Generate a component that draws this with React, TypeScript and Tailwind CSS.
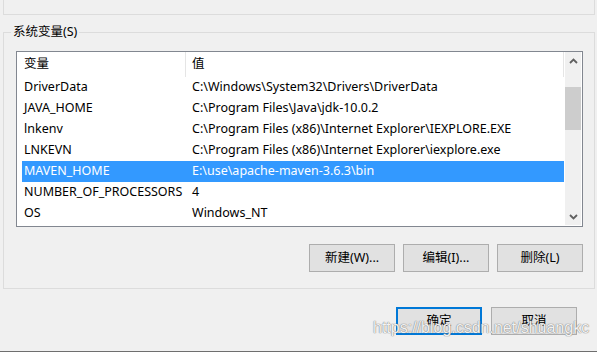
const ROWS: [string, string][] = [
  ["DriverData", "C:\\Windows\\System32\\Drivers\\DriverData"],
  ["JAVA_HOME", "C:\\Program Files\\Java\\jdk-10.0.2"],
  ["lnkenv", "C:\\Program Files (x86)\\Internet Explorer\\IEXPLORE.EXE"],
  ["LNKEVN", "C:\\Program Files (x86)\\Internet Explorer\\iexplore.exe"],
  ["MAVEN_HOME", "E:\\use\\apache-maven-3.6.3\\bin"],
  ["NUMBER_OF_PROCESSORS", "4"],
  ["OS", "Windows_NT"],
];

const SELECTED = 4;

function WinButton({ label, primary }: { label: string; primary?: boolean }) {
  return (
    <button
      type="button"
      className={`flex h-[28px] w-[86px] items-center justify-center bg-[#e1e1e1] text-[12.5px] text-black ${
        primary ? "border-2 border-[#0078d7]" : "border border-[#adadad]"
      }`}
    >
      {label}
    </button>
  );
}

function Chevron({ up }: { up?: boolean }) {
  return (
    <svg width="9" height="6" viewBox="0 0 9 6" className={up ? "" : "rotate-180"}>
      <path d="M1 5 L4.5 1.5 L8 5" fill="none" stroke="#606060" strokeWidth="1.8" />
    </svg>
  );
}

export default function App() {
  return (
    <div
      className="relative h-[352px] w-[597px] overflow-hidden bg-[#f0f0f0] text-[12.5px] text-black"
      style={{ fontFamily: '"Noto Sans", "Noto Sans CJK SC", sans-serif' }}
    >
      {/* bottom of the user variables group */}
      <div className="ml-[3px] h-[15px] w-[592px] border-x border-b border-[#dcdcdc]" />

      {/* system variables group */}
      <div className="relative ml-[3px] mt-[17px] h-[257px] w-[592px] border border-[#dcdcdc]">
        <span className="absolute left-[7px] top-[-10px] bg-[#f0f0f0] px-[2px] leading-[18px]">
          系统变量(S)
        </span>

        <div className="ml-[12px] mt-[18px] flex h-[176px] w-[567px] border border-[#828790] bg-white">
          <div className="flex w-[548px] flex-col overflow-hidden">
            <div className="flex h-[25px] shrink-0">
              <div className="flex w-[168px] items-center pl-[7px]">变量</div>
              <div className="w-px bg-[#e5e5e5]" />
              <div className="flex w-[377px] items-center pl-[6px]">值</div>
              <div className="w-px bg-[#e5e5e5]" />
            </div>
            {ROWS.map(([name, value], i) => (
              <div key={name} className="flex h-[21px] shrink-0 pl-[5px] pr-[1px]">
                <div
                  className={`flex flex-1 items-center whitespace-nowrap ${
                    i === SELECTED ? "bg-[#3399ff] text-white" : ""
                  }`}
                >
                  <div className="w-[170px] pl-[2px]">{name}</div>
                  <div className="flex-1">{value}</div>
                </div>
              </div>
            ))}
          </div>

          <div className="mb-[1px] flex w-[16px] flex-col bg-[#f0f0f0]">
            <div className="flex h-[17px] items-center justify-center">
              <Chevron up />
            </div>
            <div className="h-[18px]" />
            <div className="h-[43px] bg-[#cdcdcd]" />
            <div className="flex-1" />
            <div className="flex h-[17px] items-center justify-center">
              <Chevron />
            </div>
          </div>
        </div>

        <div className="mt-[17px] flex w-[579px] justify-end gap-[8px]">
          <WinButton label="新建(W)..." />
          <WinButton label="编辑(I)..." />
          <WinButton label="删除(L)" />
        </div>
      </div>

      <div className="mt-[18px] flex w-[577px] justify-end gap-[9px]">
        <WinButton label="确定" primary />
        <WinButton label="取消" />
      </div>

      <div className="absolute bottom-0 left-0 h-px w-full bg-[#6e6e6e]" />

      <div
        className="absolute left-[373px] top-[319px] whitespace-nowrap text-[16px] leading-[18px] text-white/90 [text-shadow:0_0_1px_#777,0_0_1px_#777]"
        style={{ fontFamily: '"Liberation Sans", sans-serif' }}
      >
        https://blog.csdn.net/shuangkc
      </div>
    </div>
  );
}
